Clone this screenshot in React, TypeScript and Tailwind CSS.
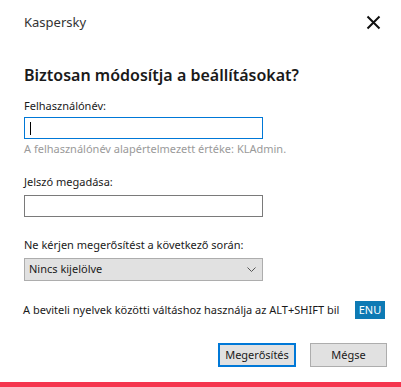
export default function App() {
  return (
    <div className="flex h-[387px] w-[401px] flex-col bg-white font-['Noto_Sans',sans-serif] text-[#1a1a1a]">
      <div className="flex h-[44px] shrink-0 items-center justify-between pl-6 pr-[20px] pt-[1px]">
        <span className="text-[13px] text-[#333]">Kaspersky</span>
        <svg width="15" height="15" viewBox="0 0 15 15" className="text-[#111]">
          <path d="M1.5 1.5 L13.5 13.5 M13.5 1.5 L1.5 13.5" stroke="currentColor" strokeWidth="2" />
        </svg>
      </div>

      <div className="flex flex-1 flex-col px-6">
        <h1 className="mt-[19px] text-[16px] font-semibold leading-[24px]">
          Biztosan módosítja a beállításokat?
        </h1>

        <label className="mt-[10px] text-[11px] leading-[18px]">Felhasználónév:</label>
        <div className="mt-[2px] flex h-[22px] w-[239px] items-center border border-[#0078d7] px-[5px]">
          <span className="h-[13px] w-px bg-black" />
        </div>
        <p className="mt-[2px] text-[11px] leading-[16px] text-[#9a9a9a]">
          A felhasználónév alapértelmezett értéke: KLAdmin.
        </p>

        <label className="mt-[16px] text-[11px] leading-[18px]">Jelszó megadása:</label>
        <div className="mt-[4px] h-[22px] w-[239px] border border-[#7a7a7a]" />

        <label className="mt-[19px] text-[11px] leading-[18px]">
          Ne kérjen megerősítést a következő során:
        </label>
        <div className="mt-[4px] flex h-[23px] w-[239px] items-center justify-between border border-[#adadad] bg-[#e1e1e1] pl-[4px] pr-[6px]">
          <span className="text-[11px]">Nincs kijelölve</span>
          <svg width="9" height="6" viewBox="0 0 9 6">
            <path d="M0.5 0.5 L4.5 4.5 L8.5 0.5" fill="none" stroke="#555" strokeWidth="1" />
          </svg>
        </div>

        <div className="mt-[20px] flex items-center justify-between">
          <span className="-ml-px whitespace-nowrap text-[11px] leading-[18px]">
            A beviteli nyelvek közötti váltáshoz használja az ALT+SHIFT bil
          </span>
          <span className="-mr-[8px] flex h-[18px] w-[30px] items-center justify-center bg-[#0e7ab4] text-[11px] text-white">
            ENU
          </span>
        </div>

        <div className="-mr-[10px] mt-[24px] flex justify-end gap-[14px]">
          <button className="h-[24px] w-[78px] border-2 border-[#0078d7] bg-[#e1e1e1] text-[11px]">
            Megerősítés
          </button>
          <button className="h-[24px] w-[77px] border border-[#adadad] bg-[#e1e1e1] text-[11px]">
            Mégse
          </button>
        </div>
      </div>

      <div className="h-[5px] shrink-0 bg-[#f5364e]" />
    </div>
  );
}
